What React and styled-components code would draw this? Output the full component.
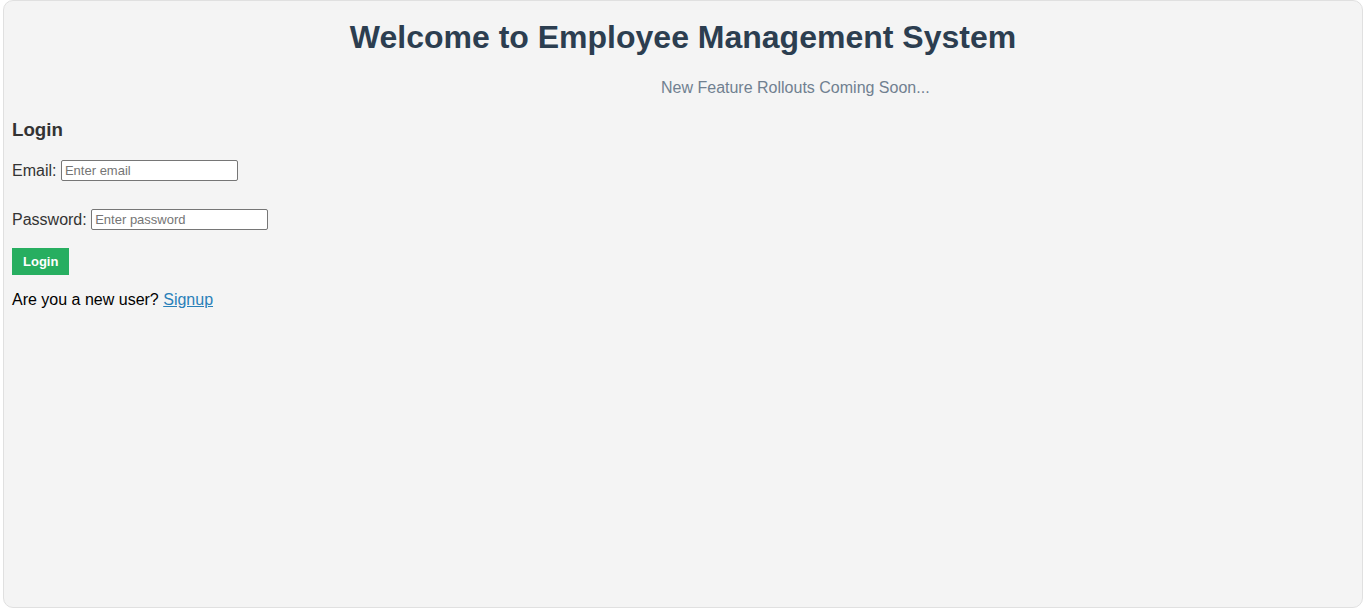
import React from 'react';
import styled, { createGlobalStyle } from 'styled-components';

const GlobalStyle = createGlobalStyle`
  body {
    margin: 0;
    background: #ffffff;
    font-family: "Liberation Sans", Arial, sans-serif;
  }
`;

const Page = styled.div`
  box-sizing: border-box;
  height: 608px;
  margin: 0 1px 0 3px;
  padding: 0 8px;
  background-color: #f4f4f4;
  border: 1px solid #e0e0e0;
  border-radius: 10px;
  overflow: hidden;
`;

const Title = styled.h1`
  margin: 0;
  padding-top: 18px;
  text-align: center;
  font-size: 32px;
  line-height: 37px;
  color: #2c3e50;
`;

const Ticker = styled.p`
  margin: 22px 0 0;
  padding-left: 649px;
  font-size: 16px;
  line-height: 20px;
  color: #708090;
  white-space: nowrap;
`;

const Heading = styled.h3`
  margin: 21px 0 0;
  font-size: 18.72px;
  line-height: 22px;
  color: #333;
`;

const Field = styled.div`
  margin-top: ${(p) => p.$gap}px;
  display: flex;
  align-items: center;
  gap: 4.5px;
  font-size: 16px;
  color: #333;
`;

const Input = styled.input`
  box-sizing: border-box;
  width: 177px;
  height: 21px;
  padding: 1px 3px;
  border: 1px solid #767676;
  border-radius: 2px;
  background: #fff;
  font-family: "Liberation Sans", Arial, sans-serif;
  font-size: 13px;

  &::placeholder {
    color: #757575;
  }
`;

const Button = styled.button`
  margin-top: 18px;
  padding: 6px 11px;
  border: none;
  background-color: #27ae60;
  color: #fff;
  font-family: "Liberation Sans", Arial, sans-serif;
  font-size: 13px;
  font-weight: bold;
  line-height: 15px;
  cursor: pointer;
`;

const Note = styled.p`
  margin: 15px 0 0;
  font-size: 16px;
  line-height: 20px;
  color: #000;
`;

const Link = styled.a`
  color: #2980b9;
  text-decoration: underline;
`;

export default function App() {
  return (
    <>
      <GlobalStyle />
      <Page>
        <Title>Welcome to Employee Management System</Title>
        <Ticker>New Feature Rollouts Coming Soon...</Ticker>
        <Heading>Login</Heading>
        <Field $gap={19}>
          <label>Email:</label>
          <Input type="email" placeholder="Enter email" />
        </Field>
        <Field $gap={28}>
          <label>Password:</label>
          <Input type="password" placeholder="Enter password" />
        </Field>
        <Button>Login</Button>
        <Note>
          Are you a new user? <Link href="#">Signup</Link>
        </Note>
      </Page>
    </>
  );
}
